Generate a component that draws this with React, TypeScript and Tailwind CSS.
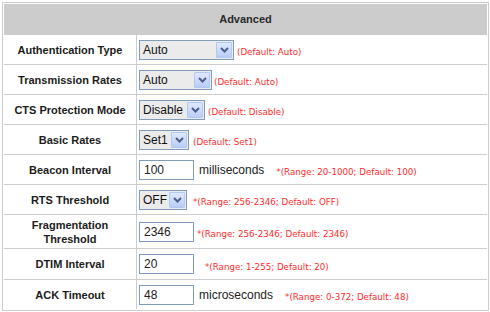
import { ReactNode } from 'react';

const hint = "font-['DejaVu_Sans',sans-serif] text-[8.7px] text-[#ff2b2b] whitespace-nowrap mt-[7px]";

function Chevron() {
  return (
    <svg width="9" height="6" viewBox="0 0 9 6">
      <path d="M1 1 L4.5 4.5 L8 1" fill="none" stroke="#4b5f88" strokeWidth="2" />
    </svg>
  );
}

function Select({ value, className }: { value: string; className: string }) {
  return (
    <div className={`flex h-[20px] border border-[#7f9db9] bg-[#ebebeb] p-px ${className}`}>
      <span className="flex-1 pl-[2px] text-[12px] leading-[16px] text-[#111]">{value}</span>
      <span className="flex w-[16px] items-center justify-center rounded-[1px] border border-[#b3c7f3] bg-gradient-to-b from-[#dfe8fe] to-[#b9cdf9]">
        <Chevron />
      </span>
    </div>
  );
}

function Input({ value }: { value: string }) {
  return (
    <div className="flex h-[20px] w-[55px] items-center border border-[#7f9db9] bg-white pl-[4px] text-[12px] text-[#222]">
      {value}
    </div>
  );
}

function Row({ label, h, children }: { label: ReactNode; h: string; children: ReactNode }) {
  return (
    <div className={`grid grid-cols-[132px_1fr] border-t border-[#cdcdcd] ${h}`}>
      <div className="flex items-center justify-center text-center text-[11px] font-bold leading-[14px] text-[#1c1c1c]">
        {label}
      </div>
      <div className="flex items-center border-l border-[#cdcdcd] pl-[2px]">{children}</div>
    </div>
  );
}

export default function App() {
  return (
    <div className="h-[312px] w-[490px] bg-white pl-[2px] pt-[2px] font-['Liberation_Sans',Arial,sans-serif]">
      <div className="w-[487px] border border-[#cdcdcd] p-px">
        <div className="flex h-[30px] items-center justify-center bg-[#cccccc] text-[11px] font-bold text-[#2a2a2a]">
          Advanced
        </div>

        <Row label="Authentication Type" h="h-[30px]">
          <Select value="Auto" className="w-[95px]" />
          <span className={`${hint} ml-[3px]`}>(Default: Auto)</span>
        </Row>

        <Row label="Transmission Rates" h="h-[30px]">
          <Select value="Auto" className="w-[73px]" />
          <span className={`${hint} ml-[2px]`}>(Default: Auto)</span>
        </Row>

        <Row label="CTS Protection Mode" h="h-[30px]">
          <Select value="Disable" className="w-[66px]" />
          <span className={`${hint} ml-[3px]`}>(Default: Disable)</span>
        </Row>

        <Row label="Basic Rates" h="h-[30px]">
          <Select value="Set1" className="w-[50px]" />
          <span className={`${hint} ml-[4px]`}>(Default: Set1)</span>
        </Row>

        <Row label="Beacon Interval" h="h-[30px]">
          <Input value="100" />
          <span className="ml-[5px] text-[12px] text-[#222]">milliseconds</span>
          <span className={`${hint} ml-[12px]`}>*(Range: 20-1000; Default: 100)</span>
        </Row>

        <Row label="RTS Threshold" h="h-[30px]">
          <Select value="OFF" className="w-[48px]" />
          <span className={`${hint} ml-[6px]`}>*(Range: 256-2346; Default: OFF)</span>
        </Row>

        <Row
          label={
            <span>
              Fragmentation
              <br />
              Threshold
            </span>
          }
          h="h-[34px]"
        >
          <Input value="2346" />
          <span className={`${hint} ml-[3px]`}>*(Range: 256-2346; Default: 2346)</span>
        </Row>

        <Row label="DTIM Interval" h="h-[31px]">
          <Input value="20" />
          <span className={`${hint} ml-[11px]`}>*(Range: 1-255; Default: 20)</span>
        </Row>

        <Row label="ACK Timeout" h="h-[30px]">
          <Input value="48" />
          <span className="ml-[5px] text-[12px] text-[#222]">microseconds</span>
          <span className={`${hint} ml-[12px]`}>*(Range: 0-372; Default: 48)</span>
        </Row>
      </div>
    </div>
  );
}
